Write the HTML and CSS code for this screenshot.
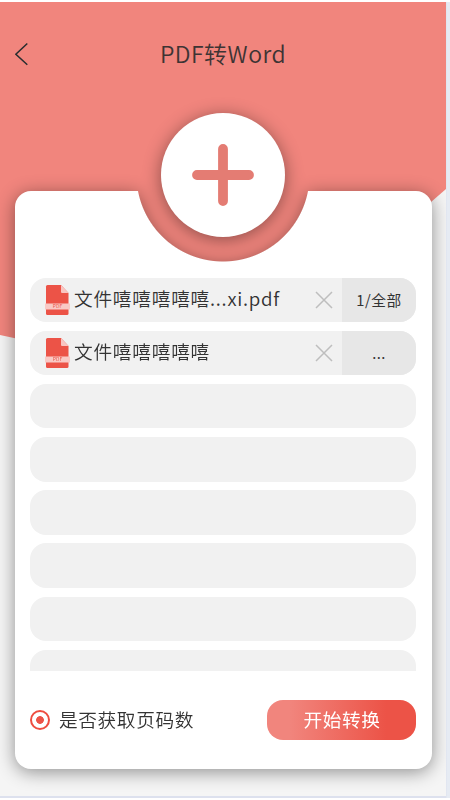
FILE: index.html
```html
<!DOCTYPE html>
<html lang="zh-CN">
<head>
<meta charset="utf-8">
<title>PDF转Word</title>
<link rel="stylesheet" href="styles.css">
</head>
<body>
<main class="screen">
  <svg class="backdrop" viewBox="0 0 446 794" aria-hidden="true"><path d="M0 0H446V187L223 381L0 333Z" fill="#f1857d"/></svg>
  <header class="header">
    <svg class="back" viewBox="0 0 14 24"><path d="M12.3 1.5L.9 12.2L12.3 22.8" fill="none" stroke="#292d2f" stroke-width="1.5"/></svg>
    <h1 class="title">PDF转Word</h1>
  </header>
  <section class="card">
    <div class="add">
      <svg class="plus" viewBox="0 0 62 62"><path d="M31 5V57M5 31H57" stroke="#e47c73" stroke-width="9.8" stroke-linecap="round"/></svg>
    </div>
    <div class="list">
      <div class="row">
        <svg class="pdf" viewBox="0 0 25 30"><path d="M2.5 0H16L23.500 8V28.500Q23.500 30 22 30H2.500Q1 30 1 28.500V1.500Q1 0 2.500 0Z" fill="#ec5347"/><path d="M16 0L23.500 8H17Q16 8 16 7Z" fill="#f9c5c1"/><path d="M0 18.500H25V24.500H0Z" fill="#f9c9c5"/><text x="12.500" y="23.300" text-anchor="middle">PDF</text></svg>
        <span class="name">文件嘻嘻嘻嘻嘻...xi.pdf</span>
        <svg class="close" viewBox="0 0 18 18"><path d="M1 1L17 17M17 1L1 17"/></svg>
        <span class="pages">1/全部</span>
      </div>
      <div class="row">
        <svg class="pdf" viewBox="0 0 25 30"><path d="M2.5 0H16L23.500 8V28.500Q23.500 30 22 30H2.500Q1 30 1 28.500V1.500Q1 0 2.500 0Z" fill="#ec5347"/><path d="M16 0L23.500 8H17Q16 8 16 7Z" fill="#f9c5c1"/><path d="M0 18.500H25V24.500H0Z" fill="#f9c9c5"/><text x="12.500" y="23.300" text-anchor="middle">PDF</text></svg>
        <span class="name">文件嘻嘻嘻嘻嘻</span>
        <svg class="close" viewBox="0 0 18 18"><path d="M1 1L17 17M17 1L1 17"/></svg>
        <span class="pages">...</span>
      </div>
      <div class="row"></div>
      <div class="row"></div>
      <div class="row"></div>
      <div class="row"></div>
      <div class="row"></div>
      <div class="row"></div>
    </div>
    <footer class="footer">
      <span class="radio"></span>
      <span class="label">是否获取页码数</span>
      <button class="start">开始转换</button>
    </footer>
  </section>
</main>
</body>
</html>
```

FILE: styles.css
```css
* { box-sizing: border-box; }
body {
  margin: 0;
  height: 800px;
  padding: 2px 4px 2px 0;
  overflow: hidden;
  background: linear-gradient(#fff 2px, transparent 2px 798px, #fff 798px), linear-gradient(90deg, #dde1ee 446px, #e6ebf3 447px);
  font-family: "Noto Sans CJK SC", sans-serif;
  color: #333;
}
.screen {
  position: relative;
  width: 446px;
  height: 794px;
  padding: 0 14px 0 15px;
  overflow: hidden;
  background: #f5f5f5;
}
.backdrop { position: absolute; left: 0; top: 0; width: 446px; height: 794px; }
.header {
  position: relative;
  display: flex;
  align-items: center;
  height: 104px;
}
.back { width: 14px; height: 24px; }
.title {
  flex: 1;
  margin: 0 15px 2px 0;
  text-align: center;
  font-size: 23px;
  line-height: 32px;
  font-weight: 350;
  letter-spacing: .5px;
  color: #3d3434;
}
.card {
  position: relative;
  display: flex;
  flex-direction: column;
  width: 417px;
  height: 578px;
  margin-top: 85px;
  padding: 86.5px 16px 0 15px;
  border-radius: 16px;
  background: radial-gradient(circle at 208px -16px, transparent 86px, #fff 87px);
  filter: drop-shadow(0 3px 9px rgba(0, 0, 0, .42));
}
.add {
  position: absolute;
  left: 146px;
  top: -78.5px;
  display: flex;
  align-items: center;
  justify-content: center;
  width: 124px;
  height: 124px;
  border-radius: 50%;
  background: #fff;
}
.plus { width: 62px; height: 62px; }
.list {
  display: flex;
  flex-direction: column;
  gap: 8.7px;
  height: 393.5px;
  overflow: hidden;
}
.row {
  display: flex;
  flex: none;
  align-items: center;
  height: 44.5px;
  padding-left: 14.5px;
  overflow: hidden;
  border-radius: 16px;
  background: #f1f1f1;
}
.pdf { width: 25px; height: 30px; }
.pdf text { font-size: 5px; fill: #ec5347; }
.name {
  flex: 1;
  margin: 0 0 3px 4.5px;
  font-size: 18.7px;
  line-height: 26px;
  font-weight: 350;
  letter-spacing: .75px;
  white-space: nowrap;
}
.close { width: 18px; height: 18px; margin-right: 9.5px; }
.close path { stroke: #bebebe; stroke-width: 1.5; }
.pages {
  width: 74px;
  height: 44.5px;
  background: #e7e7e7;
  text-align: center;
  font-size: 14.7px;
  line-height: 43px;
  letter-spacing: .5px;
}
.footer { display: flex; align-items: center; height: 40px; margin-top: 29px; }
.radio {
  width: 20px;
  height: 20px;
  border: 2px solid #ee4d40;
  border-radius: 50%;
  background: radial-gradient(circle, #ec5347 3.5px, #fff 4.2px);
}
.label {
  flex: 1;
  margin: 0 0 3px 9px;
  font-size: 18.7px;
  font-weight: 350;
  letter-spacing: .6px;
}
.start {
  width: 149px;
  height: 40px;
  padding: 0 0 3px 1px;
  border: 0;
  border-radius: 16px;
  background: linear-gradient(90deg, #f1857d 15%, #ec5347 80%);
  color: #fff;
  font: 400 18.7px "Noto Sans CJK SC", sans-serif;
  letter-spacing: .6px;
}
```
